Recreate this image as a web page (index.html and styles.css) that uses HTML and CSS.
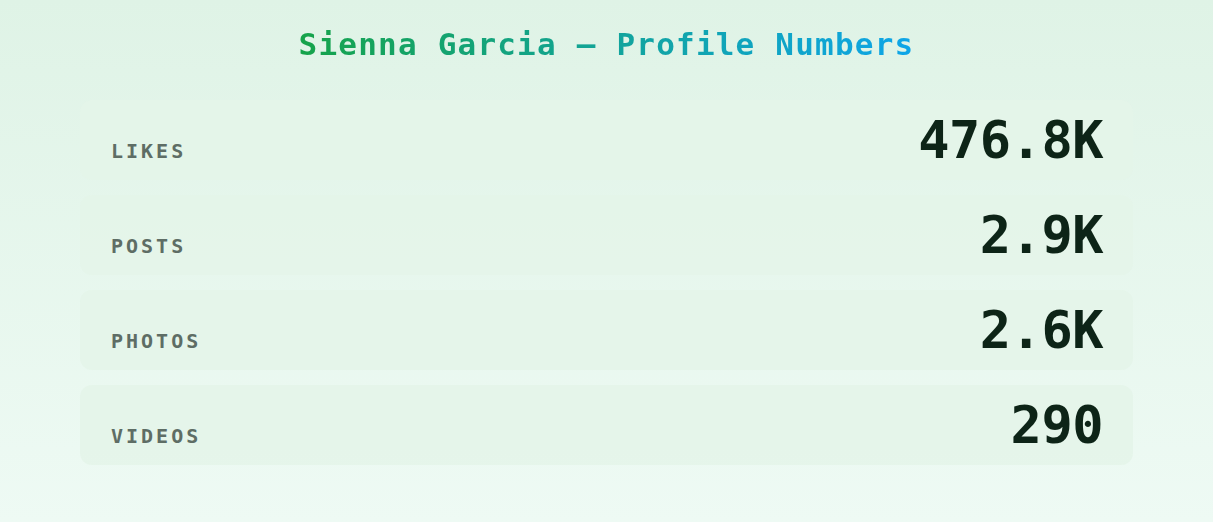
FILE: index.html
```html
<!DOCTYPE html>
<html lang="en">
<head>
<meta charset="utf-8">
<title>Sienna Garcia — Profile Numbers</title>
<link rel="stylesheet" href="styles.css">
</head>
<body>
<main class="page">
  <h1 class="title">Sienna Garcia — Profile Numbers</h1>
  <ul class="stats">
    <li class="stat"><span class="stat-label">Likes</span><span class="stat-value">476.8K</span></li>
    <li class="stat"><span class="stat-label">Posts</span><span class="stat-value">2.9K</span></li>
    <li class="stat"><span class="stat-label">Photos</span><span class="stat-value">2.6K</span></li>
    <li class="stat"><span class="stat-label">Videos</span><span class="stat-value">290</span></li>
  </ul>
</main>
</body>
</html>
```
FILE: styles.css
```css
html, body {
  margin: 0;
  padding: 0;
}
body {
  width: 1213px;
  height: 522px;
  overflow: hidden;
  background: linear-gradient(180deg, #dff3e6 0%, #eefaf4 100%);
  font-family: "DejaVu Sans Mono", "Liberation Mono", monospace;
}
.page {
  padding: 25px 80px 0;
}
.title {
  margin: 0 auto 37px;
  width: max-content;
  text-align: center;
  font-size: 31px;
  line-height: 38px;
  font-weight: 700;
  letter-spacing: 1.2px;
  background: linear-gradient(90deg, #16a34a 0%, #0ea5e9 100%);
  -webkit-background-clip: text;
  background-clip: text;
  color: transparent;
}
.stats {
  list-style: none;
  margin: 0;
  padding: 0;
  display: flex;
  flex-direction: column;
  gap: 15px;
}
.stat {
  height: 80px;
  box-sizing: border-box;
  padding: 0 30px 0 31px;
  display: flex;
  justify-content: space-between;
  align-items: baseline;
  border-radius: 12px;
  background: rgba(228, 244, 233, 0.85);
}
.stat-label {
  font-size: 20px;
  font-weight: 700;
  letter-spacing: 3px;
  text-transform: uppercase;
  color: #5e6d65;
  line-height: 80px;
}
.stat-value {
  font-size: 52px;
  font-weight: 700;
  letter-spacing: -0.5px;
  color: #0d2417;
  line-height: 80px;
}
```
